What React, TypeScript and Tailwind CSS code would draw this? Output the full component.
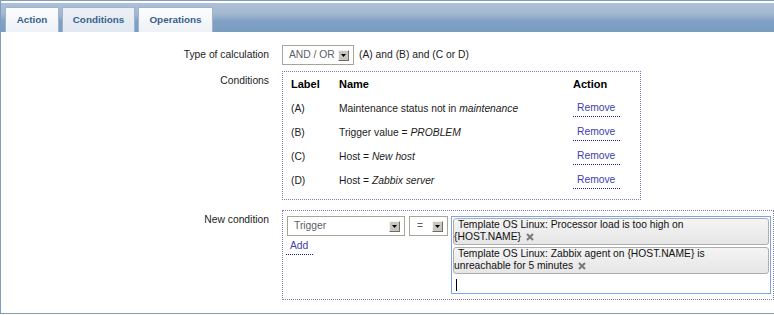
import React from "react";

function Arrow() {
  return (
    <span className="flex h-[11px] w-[11px] items-center justify-center border border-t-[#f4f4f4] border-l-[#f4f4f4] border-r-[#6d6d6d] border-b-[#6d6d6d] bg-[#c9c6bf]">
      <svg width="5" height="3" viewBox="0 0 5 3">
        <path d="M0 0H5L2.5 3Z" fill="#000" />
      </svg>
    </span>
  );
}

function Select({ text, className }: { text: string; className: string }) {
  return (
    <div className={`flex h-[20px] shrink-0 items-center border border-[#a9a699] bg-white pr-[4px] ${className}`}>
      <span className="text-[#5b5f66]">{text}</span>
      <span className="ml-auto">
        <Arrow />
      </span>
    </div>
  );
}

function XIcon() {
  return (
    <svg width="8" height="8" viewBox="0 0 8 8" className="ml-[5px] inline-block align-[-1px]">
      <path d="M1 1L7 7M7 1L1 7" stroke="#7a7a7a" strokeWidth="2" />
    </svg>
  );
}

function Tag({ first, second }: { first: string; second: string }) {
  return (
    <div className="h-[27px] rounded-[3px] border border-[#adadad] bg-[linear-gradient(to_bottom,#f4f4f4,#e6e6e6)] leading-[12px] text-[#111]">
      <div className="pl-[4px]">{first}</div>
      <div className="flex items-center">
        <span>{second}</span>
        <XIcon />
      </div>
    </div>
  );
}

function RemoveLink() {
  return (
    <span className="inline-block border-b border-dotted border-[#1c1c8c] pb-[1px] pl-[4px] pr-[5px] pt-[1px] leading-[14px] text-[#4040aa]">
      Remove
    </span>
  );
}

const rows: { label: string; name: React.ReactNode }[] = [
  { label: "(A)", name: <>Maintenance status not in <i>maintenance</i></> },
  { label: "(B)", name: <>Trigger value = <i>PROBLEM</i></> },
  { label: "(C)", name: <>Host = <i>New host</i></> },
  { label: "(D)", name: <>Host = <i>Zabbix server</i></> },
];

export default function App() {
  return (
    <div className="h-[315px] w-[774px] overflow-hidden bg-white font-['Liberation_Sans',Arial,sans-serif] text-[10.3px] text-[#1c1c1c]">
      <div className="flex h-[314px] flex-col border-b border-l border-t border-[#7f9cc0]">
        <div className="mt-[2px] flex h-[29px] shrink-0 items-end gap-[3px] bg-[linear-gradient(to_bottom,#adc0d7_0%,#a4b8d1_38%,#7fa1c5_62%,#799dc2_100%)] pl-[4px]">
          <div className="flex h-[25px] w-[54px] items-center justify-center border border-b-0 border-[#9fb4cc] bg-[linear-gradient(to_bottom,#fbfcfd,#eef2f6)] text-[9.9px] font-bold text-[#38608c]">
            Action
          </div>
          <div className="flex h-[25px] w-[73px] items-center justify-center border border-b-0 border-[#9fb4cc] bg-[linear-gradient(to_bottom,#edf1f6,#dfe7f0)] text-[9.9px] font-bold text-[#38608c]">
            Conditions
          </div>
          <div className="flex h-[25px] w-[75px] items-center justify-center border border-b-0 border-[#9fb4cc] bg-[linear-gradient(to_bottom,#fbfcfd,#eef2f6)] text-[9.9px] font-bold text-[#38608c]">
            Operations
          </div>
        </div>

        <div className="flex flex-col pt-[13px]">
          <div className="flex h-[20px] items-center">
            <div className="w-[268px] text-right">Type of calculation</div>
            <div className="ml-[13px] flex items-center">
              <Select text="AND / OR" className="w-[72px] pl-[6px]" />
              <span className="ml-[5px]">(A) and (B) and (C or D)</span>
            </div>
          </div>

          <div className="mt-[6px] flex">
            <div className="w-[268px] pt-[4px] text-right leading-[12px]">Conditions</div>
            <div className="ml-[13px] w-[359px] border border-dotted border-[#7b7fb3] px-[8px] pb-[7px]">
              <div className="flex h-[24px] items-center text-[11px] font-bold text-black">
                <div className="w-[48px]">Label</div>
                <div className="w-[234px]">Name</div>
                <div>Action</div>
              </div>
              {rows.map((r) => (
                <div key={r.label} className="flex h-[24px] items-center pt-[1px]">
                  <div className="w-[48px]">{r.label}</div>
                  <div className="w-[234px]">{r.name}</div>
                  <div>
                    <RemoveLink />
                  </div>
                </div>
              ))}
            </div>
          </div>

          <div className="mt-[10px] flex">
            <div className="w-[268px] pt-[4px] text-right leading-[12px]">New condition</div>
            <div className="ml-[13px] flex h-[90px] w-[492px] items-start border border-dotted border-[#7b7fb3] pl-[4px] pt-[5px]">
              <div className="flex flex-col">
                <div className="flex gap-[4px]">
                  <Select text="Trigger" className="w-[118px] pl-[6px]" />
                  <Select text="=" className="w-[39px] pl-[7px]" />
                </div>
                <div className="mt-[2px]">
                  <span className="-ml-[1px] inline-block border-b border-dotted border-[#1c1c8c] pb-[1px] pl-[4px] pr-[5px] leading-[14px] text-[#4040aa]">
                    Add
                  </span>
                </div>
              </div>
              <div className="ml-[3px] flex h-[78px] w-[320px] flex-col gap-[2px] border border-[#7ba6e6] bg-white px-[1px] pt-[1px]">
                <Tag first="Template OS Linux: Processor load is too high on" second="{HOST.NAME}" />
                <Tag first="Template OS Linux: Zabbix agent on {HOST.NAME} is" second="unreachable for 5 minutes" />
                <div className="ml-[3px] mt-[3px] h-[12px] w-[1px] bg-black" />
              </div>
            </div>
          </div>
        </div>
      </div>
    </div>
  );
}
